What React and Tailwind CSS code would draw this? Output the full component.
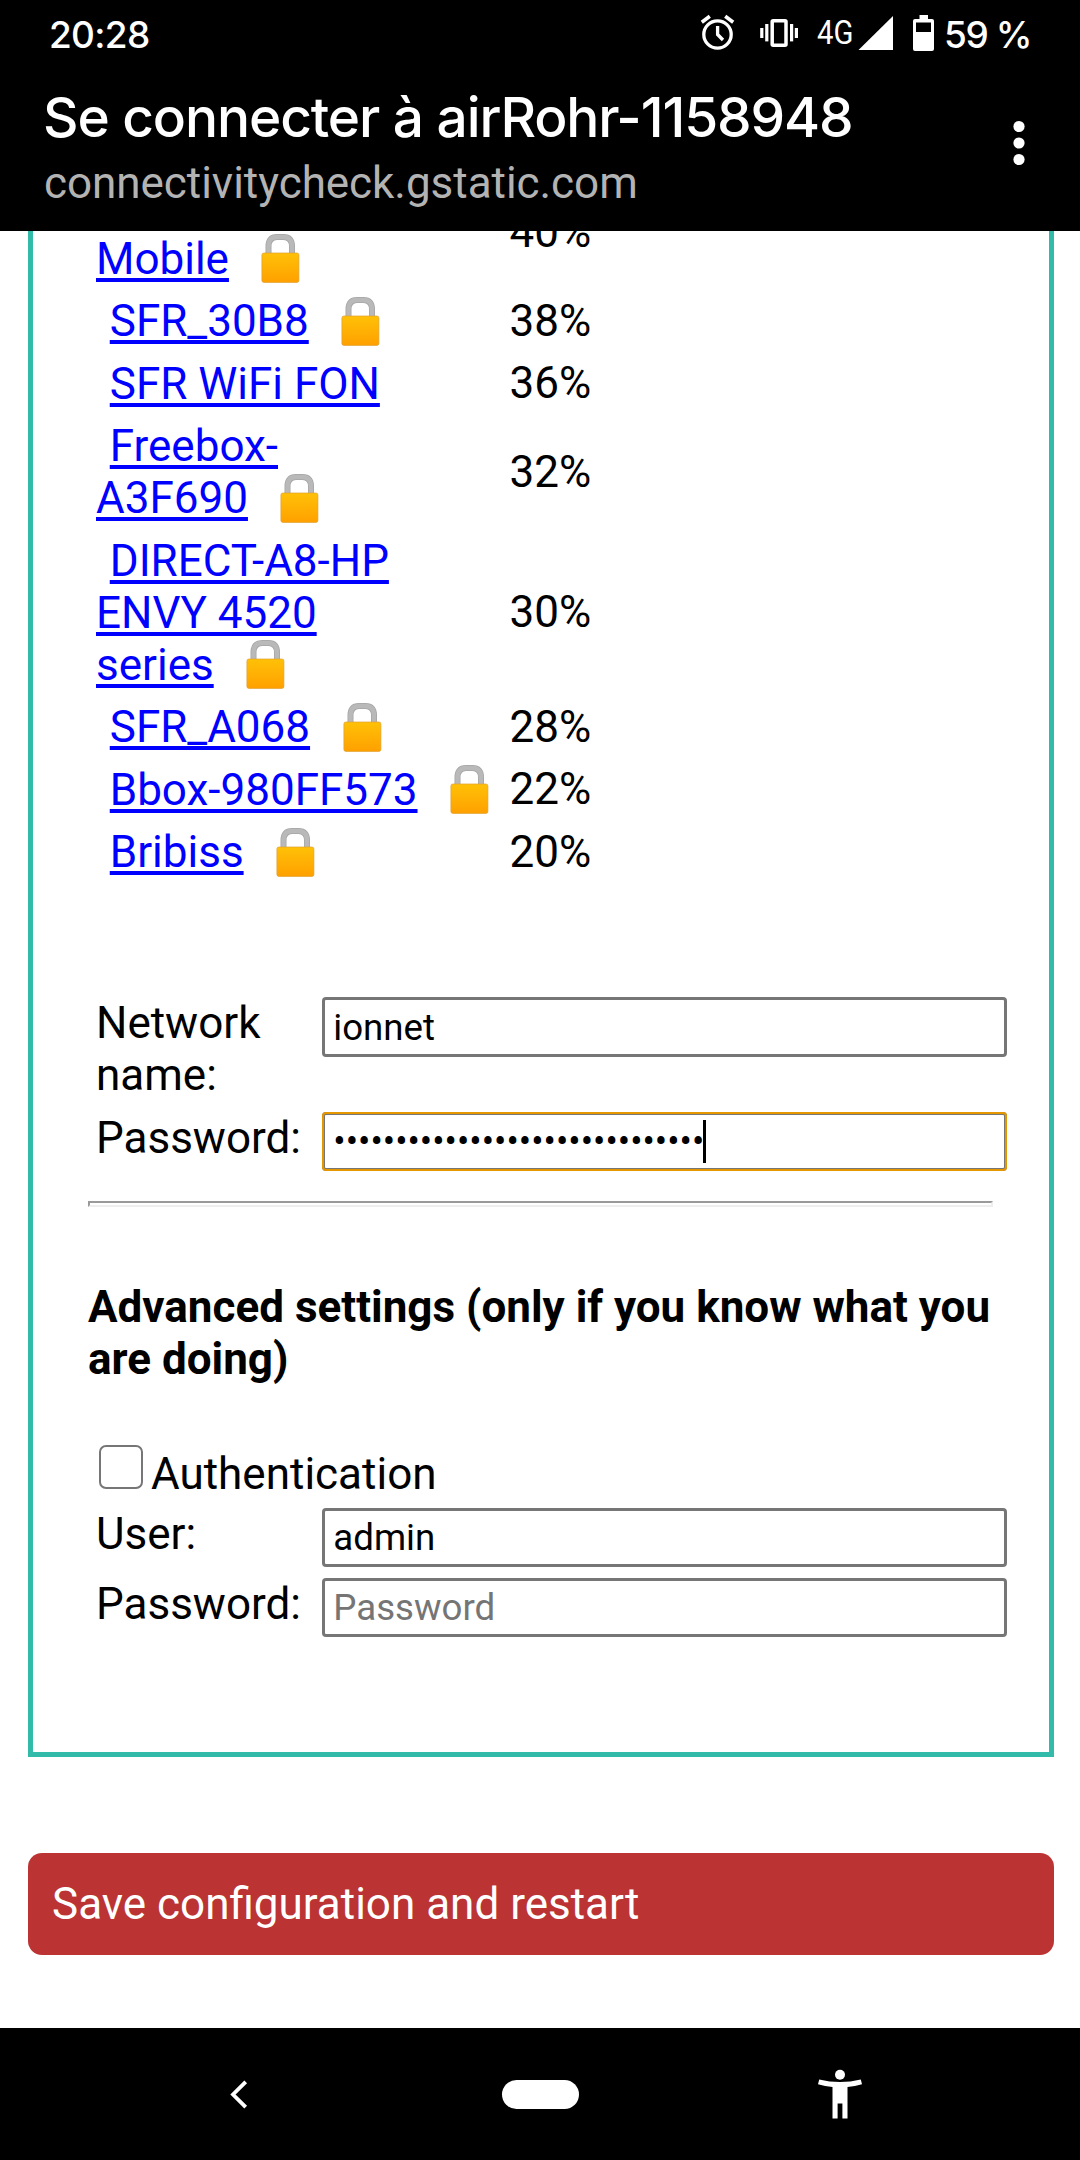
import React from "react";

const networks = [
  { lines: ["\u00a0", "Mobile"], signal: "40%", locked: true },
  { lines: ["SFR_30B8"], signal: "38%", locked: true },
  { lines: ["SFR WiFi FON"], signal: "36%", locked: false },
  { lines: ["Freebox-", "A3F690"], signal: "32%", locked: true },
  { lines: ["DIRECT-A8-HP", "ENVY 4520", "series"], signal: "30%", locked: true },
  { lines: ["SFR_A068"], signal: "28%", locked: true },
  { lines: ["Bbox-980FF573"], signal: "22%", locked: true },
  { lines: ["Bribiss"], signal: "20%", locked: true },
];

function Lock() {
  return (
    <svg className="ml-[32.5px] mt-[1.5px] h-[49px] w-[39px] shrink-0" viewBox="0 0 39 49">
      <defs>
        <linearGradient id="body" x1="0" y1="0" x2="0" y2="1">
          <stop offset="0" stopColor="#ffc107" />
          <stop offset="1" stopColor="#ffa000" />
        </linearGradient>
      </defs>
      <path d="M7.5 21V12.5Q7.5 3 16 3H22.5Q31 3 31 12.5V21" fill="none" stroke="#a6a6a6" strokeWidth="6" />
      <path d="M7.5 21V12.5Q7.5 3 16 3H22.5Q31 3 31 12.5V21" fill="none" stroke="#b9b9b9" strokeWidth="4.4" />
      <rect x="0.9" y="19" width="37" height="29.4" rx="2" fill="url(#body)" stroke="#e0a030" strokeOpacity="0.7" strokeWidth="1" />
    </svg>
  );
}

function NetworkRow({ lines, signal, locked }) {
  return (
    <div className="flex items-center">
      <div className="w-[413.5px]">
        {lines.map((line, i) => (
          <div key={line} className={i === 0 ? "flex h-[52px] pl-[13.75px]" : "flex h-[52px]"}>
            <a className="whitespace-nowrap text-[#0000ff] underline decoration-[4px] underline-offset-[4px]">{line}</a>
            {locked && i === lines.length - 1 && <Lock />}
          </div>
        ))}
      </div>
      <div className="-mt-px">{signal}</div>
    </div>
  );
}

function Field({ label, className, labelClass, boxClass, children }) {
  return (
    <div className={"flex items-start " + className}>
      <div className={"w-[226px] pr-[20px] " + (labelClass || "")}>{label}</div>
      <div className={"flex w-[685px] items-center rounded-[4px] border-[3px] border-[#767676] pl-[8.3px] text-[36.67px] leading-[43px] " + boxClass}>
        {children}
      </div>
    </div>
  );
}

function StatusBar() {
  return (
    <div className="flex h-[84px] items-start pl-[49px]">
      <div className="mt-[15px] w-[101px] whitespace-nowrap font-['Inter',sans-serif] text-[37px] leading-[40px] font-medium tracking-[-0.7px]">20:28</div>
      <svg className="ml-[550px] mt-[14px] h-[38px] w-[35px]" viewBox="700 14 35 38" fill="none" stroke="#fff">
        <circle cx="717.5" cy="34.5" r="13.7" strokeWidth="3.3" />
        <path d="M717.6 26V34.5L723 40" strokeWidth="3.3" />
        <path d="M701.8 22.2L709.8 16.2M733.2 22.2L725.2 16.2" strokeWidth="3.6" />
      </svg>
      <svg className="ml-[25px] mt-[17px] h-[32px] w-[39px]" viewBox="760 17 39 32" fill="#fff">
        <rect x="772.2" y="20.7" width="13.8" height="24.6" rx="1" fill="none" stroke="#fff" strokeWidth="3.5" />
        <rect x="765.2" y="24" width="3.2" height="17.4" />
        <rect x="760.2" y="28" width="3.2" height="10" />
        <rect x="790" y="24" width="3.2" height="17.4" />
        <rect x="794.8" y="28" width="3.2" height="10" />
      </svg>
      <div className="ml-[18px] mt-[12px] w-[41px] origin-left scale-x-[0.86] text-[34px] leading-[40px]">4G</div>
      <svg className="mt-[15px] h-[36px] w-[35px]" viewBox="0 0 35 36" fill="#fff">
        <path d="M35 1V35H0.5z" />
      </svg>
      <svg className="ml-[20px] mt-[15px] h-[36px] w-[21px]" viewBox="0 0 21 36" fill="#fff">
        <path fillRule="evenodd" d="M6.5 0H15V4H19Q21 4 21 6V34Q21 36 19 36H2Q0 36 0 34V6Q0 4 2 4H6.5zM3 7.5V17H18V7.5z" />
      </svg>
      <div className="ml-[10px] mt-[15px] whitespace-nowrap font-['Inter',sans-serif] text-[37px] leading-[40px] font-medium tracking-[-1.4px]">59 %</div>
    </div>
  );
}

export default function App() {
  return (
    <div className="flex h-[2160px] w-[1080px] flex-col overflow-hidden bg-white font-['Roboto',sans-serif] text-[44px] leading-[52px] text-black">
      <header className="h-[231px] shrink-0 bg-black text-white">
        <StatusBar />
        <div className="flex pl-[44px]">
          <div className="w-[969px]">
            <h1 className="-ml-px whitespace-nowrap font-['Inter',sans-serif] text-[55px] leading-[66px] font-medium tracking-[-1.1px]">Se connecter à airRohr-1158948</h1>
            <div className="mt-[7px] tracking-[-0.04px] text-[#b3b3b3]">connectivitycheck.gstatic.com</div>
          </div>
          <svg className="mt-[36px] h-[46px] w-[12px]" viewBox="0 0 12 46" fill="#fff">
            <circle cx="6" cy="6.5" r="5.6" />
            <circle cx="6" cy="23" r="5.6" />
            <circle cx="6" cy="39.5" r="5.6" />
          </svg>
        </div>
      </header>

      <main className="flex h-[1797px] shrink-0 flex-col overflow-hidden px-[28px]">
        <section className="h-[1526px] w-[1026px] shrink-0 overflow-hidden border-x-[5px] border-b-[5px] border-[#33bbaa] pl-[55px]">
          <div className="-mt-[50.1px] flex flex-col gap-[10.5px] pl-[8px]">
            {networks.map((n) => (
              <NetworkRow key={n.signal} {...n} />
            ))}
          </div>

          <div className="mt-[118.6px] pl-[8px]">
            <Field label="Network name:" className="h-[114px]" boxClass="h-[60px]">ionnet</Field>
            <Field
              label="Password:"
              className="h-[90px]"
              labelClass="mt-px"
              boxClass="mt-px h-[59px] relative after:absolute after:-inset-[3px] after:rounded-[4px] after:border-2 after:border-[#e59700]"
            >
              <span>{"•".repeat(30)}</span>
              <span className="-ml-px h-[43px] w-[3px] bg-black" />
            </Field>
          </div>

          <div className="h-[6px] w-[905px] border-2 border-t-[#9a9a9a] border-r-[#eeeeee] border-b-[#eeeeee] border-l-[#9a9a9a]" />

          <h2 className="mt-[74px] w-[910px] font-bold">Advanced settings (only if you know what you are doing)</h2>

          <div className="mt-[60px] flex h-[63px] pl-[11px]">
            <div className="h-[44px] w-[44px] rounded-[7px] border-[2.5px] border-[#767676]" />
            <div className="ml-[8px] mt-[3px]">Authentication</div>
          </div>
          <div className="pl-[8px]">
            <Field label="User:" className="h-[70px]" boxClass="h-[59px]">admin</Field>
            <Field label="Password:" className="h-[59px]" boxClass="h-[59px] text-[#757575]">Password</Field>
          </div>
        </section>

        <button className="mt-[96px] h-[102px] w-[1026px] shrink-0 rounded-[14px] bg-[#bb3333] pl-[24px] text-left text-white">
          Save configuration and restart
        </button>
      </main>

      <nav className="flex h-[132px] shrink-0 items-start bg-black">
        <svg className="ml-[230px] mt-[52px] h-[29px] w-[18px]" viewBox="0 0 18 29" fill="none" stroke="#fff" strokeWidth="3.8">
          <path d="M15.7 1.8L3 14.5L15.7 27.2" />
        </svg>
        <div className="ml-[254px] mt-[52px] h-[29px] w-[77px] rounded-full bg-white" />
        <svg className="ml-[239px] mt-[41px] h-[50px] w-[44px]" viewBox="0 0 44 50" fill="#fff">
          <circle cx="22" cy="5.8" r="5" />
          <path d="M1.2 10.6Q22 15.6 42.8 10.6L44 15.2Q37 17.2 29.5 18V49.5H24.4V34.5H19.6V49.5H14.5V18Q7 17.2 0 15.2z" />
        </svg>
      </nav>
    </div>
  );
}
